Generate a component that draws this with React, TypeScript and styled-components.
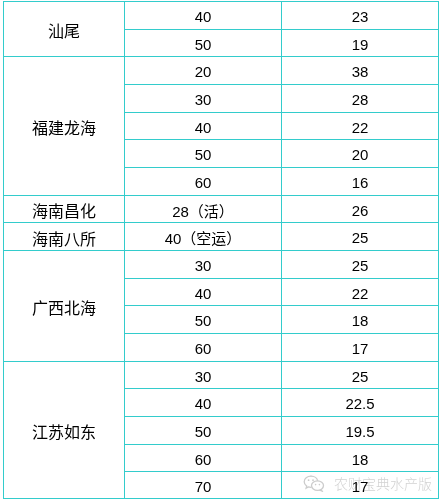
import styled, { createGlobalStyle } from "styled-components";

const GlobalStyle = createGlobalStyle`
  html, body {
    margin: 0;
    padding: 0;
    background: #fff;
  }
  body {
    padding: 1px 0 0 3px;
    font-family: "Liberation Sans", "Noto Sans CJK SC", sans-serif;
    color: #000;
  }
`;

type Item = { weight: string; price: string };
type Region = { name: string; items: Item[] };

const regions: Region[] = [
  { name: "汕尾", items: [{ weight: "40", price: "23" }, { weight: "50", price: "19" }] },
  {
    name: "福建龙海",
    items: [
      { weight: "20", price: "38" },
      { weight: "30", price: "28" },
      { weight: "40", price: "22" },
      { weight: "50", price: "20" },
      { weight: "60", price: "16" },
    ],
  },
  { name: "海南昌化", items: [{ weight: "28（活）", price: "26" }] },
  { name: "海南八所", items: [{ weight: "40（空运）", price: "25" }] },
  {
    name: "广西北海",
    items: [
      { weight: "30", price: "25" },
      { weight: "40", price: "22" },
      { weight: "50", price: "18" },
      { weight: "60", price: "17" },
    ],
  },
  {
    name: "江苏如东",
    items: [
      { weight: "30", price: "25" },
      { weight: "40", price: "22.5" },
      { weight: "50", price: "19.5" },
      { weight: "60", price: "18" },
      { weight: "70", price: "17" },
    ],
  },
];

// row heights measured between the grid lines
const rowHeights = [27, 26, 27, 27, 26, 27, 27, 26, 27, 27, 26, 27, 27, 26, 27, 27, 26, 26];

const Wrap = styled.div`
  position: relative;
  width: 436px;
`;

const Table = styled.div`
  display: grid;
  grid-template-columns: 120px 156px 156px;
  grid-template-rows: ${rowHeights.map((h) => `${h}px`).join(" ")};
  gap: 1px;
  padding: 1px;
  background: #33cccc;
`;

const Cell = styled.div<{ $col: number; $row: number; $span?: number }>`
  grid-column: ${(p) => p.$col};
  grid-row: ${(p) => p.$row} / span ${(p) => p.$span ?? 1};
  background: #fff;
  display: flex;
  align-items: center;
  justify-content: center;
  padding-top: 2px;
  box-sizing: border-box;
  font-size: 15px;
  white-space: nowrap;
`;

const Label = styled(Cell)`
  font-size: 16px;
`;

const Watermark = styled.div`
  position: absolute;
  left: 300px;
  top: 472px;
  display: flex;
  align-items: center;
  gap: 9px;
  color: #d2d2d2;
  font-size: 14px;
  font-family: "Noto Sans CJK SC", sans-serif;
  font-weight: 300;
  mix-blend-mode: multiply;
  pointer-events: none;
`;

function WeChatMark() {
  return (
    <svg width="22" height="17" viewBox="0 0 22 17" fill="none">
      <path
        d="M8 1.2C4.2 1.2 1.2 3.7 1.2 6.8c0 1.8 1 3.3 2.5 4.3l-0.6 2 2.3-1.2c0.8 0.2 1.7 0.4 2.6 0.4"
        stroke="#cccccc"
        strokeWidth="1.3"
        strokeLinecap="round"
      />
      <path
        d="M8 1.2c3.5 0 6.3 2.1 6.7 4.9"
        stroke="#cccccc"
        strokeWidth="1.3"
        strokeLinecap="round"
      />
      <ellipse cx="14.5" cy="10.6" rx="6" ry="4.8" stroke="#cccccc" strokeWidth="1.3" fill="#fff" />
      <path d="M18.2 14.6l1 1.6-2.4-1" stroke="#cccccc" strokeWidth="1.2" strokeLinecap="round" />
      <circle cx="5.6" cy="5.2" r="0.9" fill="#cccccc" />
      <circle cx="10" cy="5.2" r="0.9" fill="#cccccc" />
      <circle cx="12.6" cy="9.6" r="0.8" fill="#cccccc" />
      <circle cx="16.4" cy="9.6" r="0.8" fill="#cccccc" />
    </svg>
  );
}

export default function App() {
  let row = 1;
  const cells: React.ReactNode[] = [];
  regions.forEach((r) => {
    cells.push(
      <Label key={r.name} $col={1} $row={row} $span={r.items.length}>
        {r.name}
      </Label>
    );
    r.items.forEach((it, i) => {
      cells.push(
        <Cell key={`${r.name}-w-${i}`} $col={2} $row={row + i}>
          {it.weight}
        </Cell>
      );
      cells.push(
        <Cell key={`${r.name}-p-${i}`} $col={3} $row={row + i}>
          {it.price}
        </Cell>
      );
    });
    row += r.items.length;
  });

  return (
    <>
      <GlobalStyle />
      <Wrap>
        <Table>{cells}</Table>
        <Watermark>
          <WeChatMark />
          <span>农财宝典水产版</span>
        </Watermark>
      </Wrap>
    </>
  );
}
